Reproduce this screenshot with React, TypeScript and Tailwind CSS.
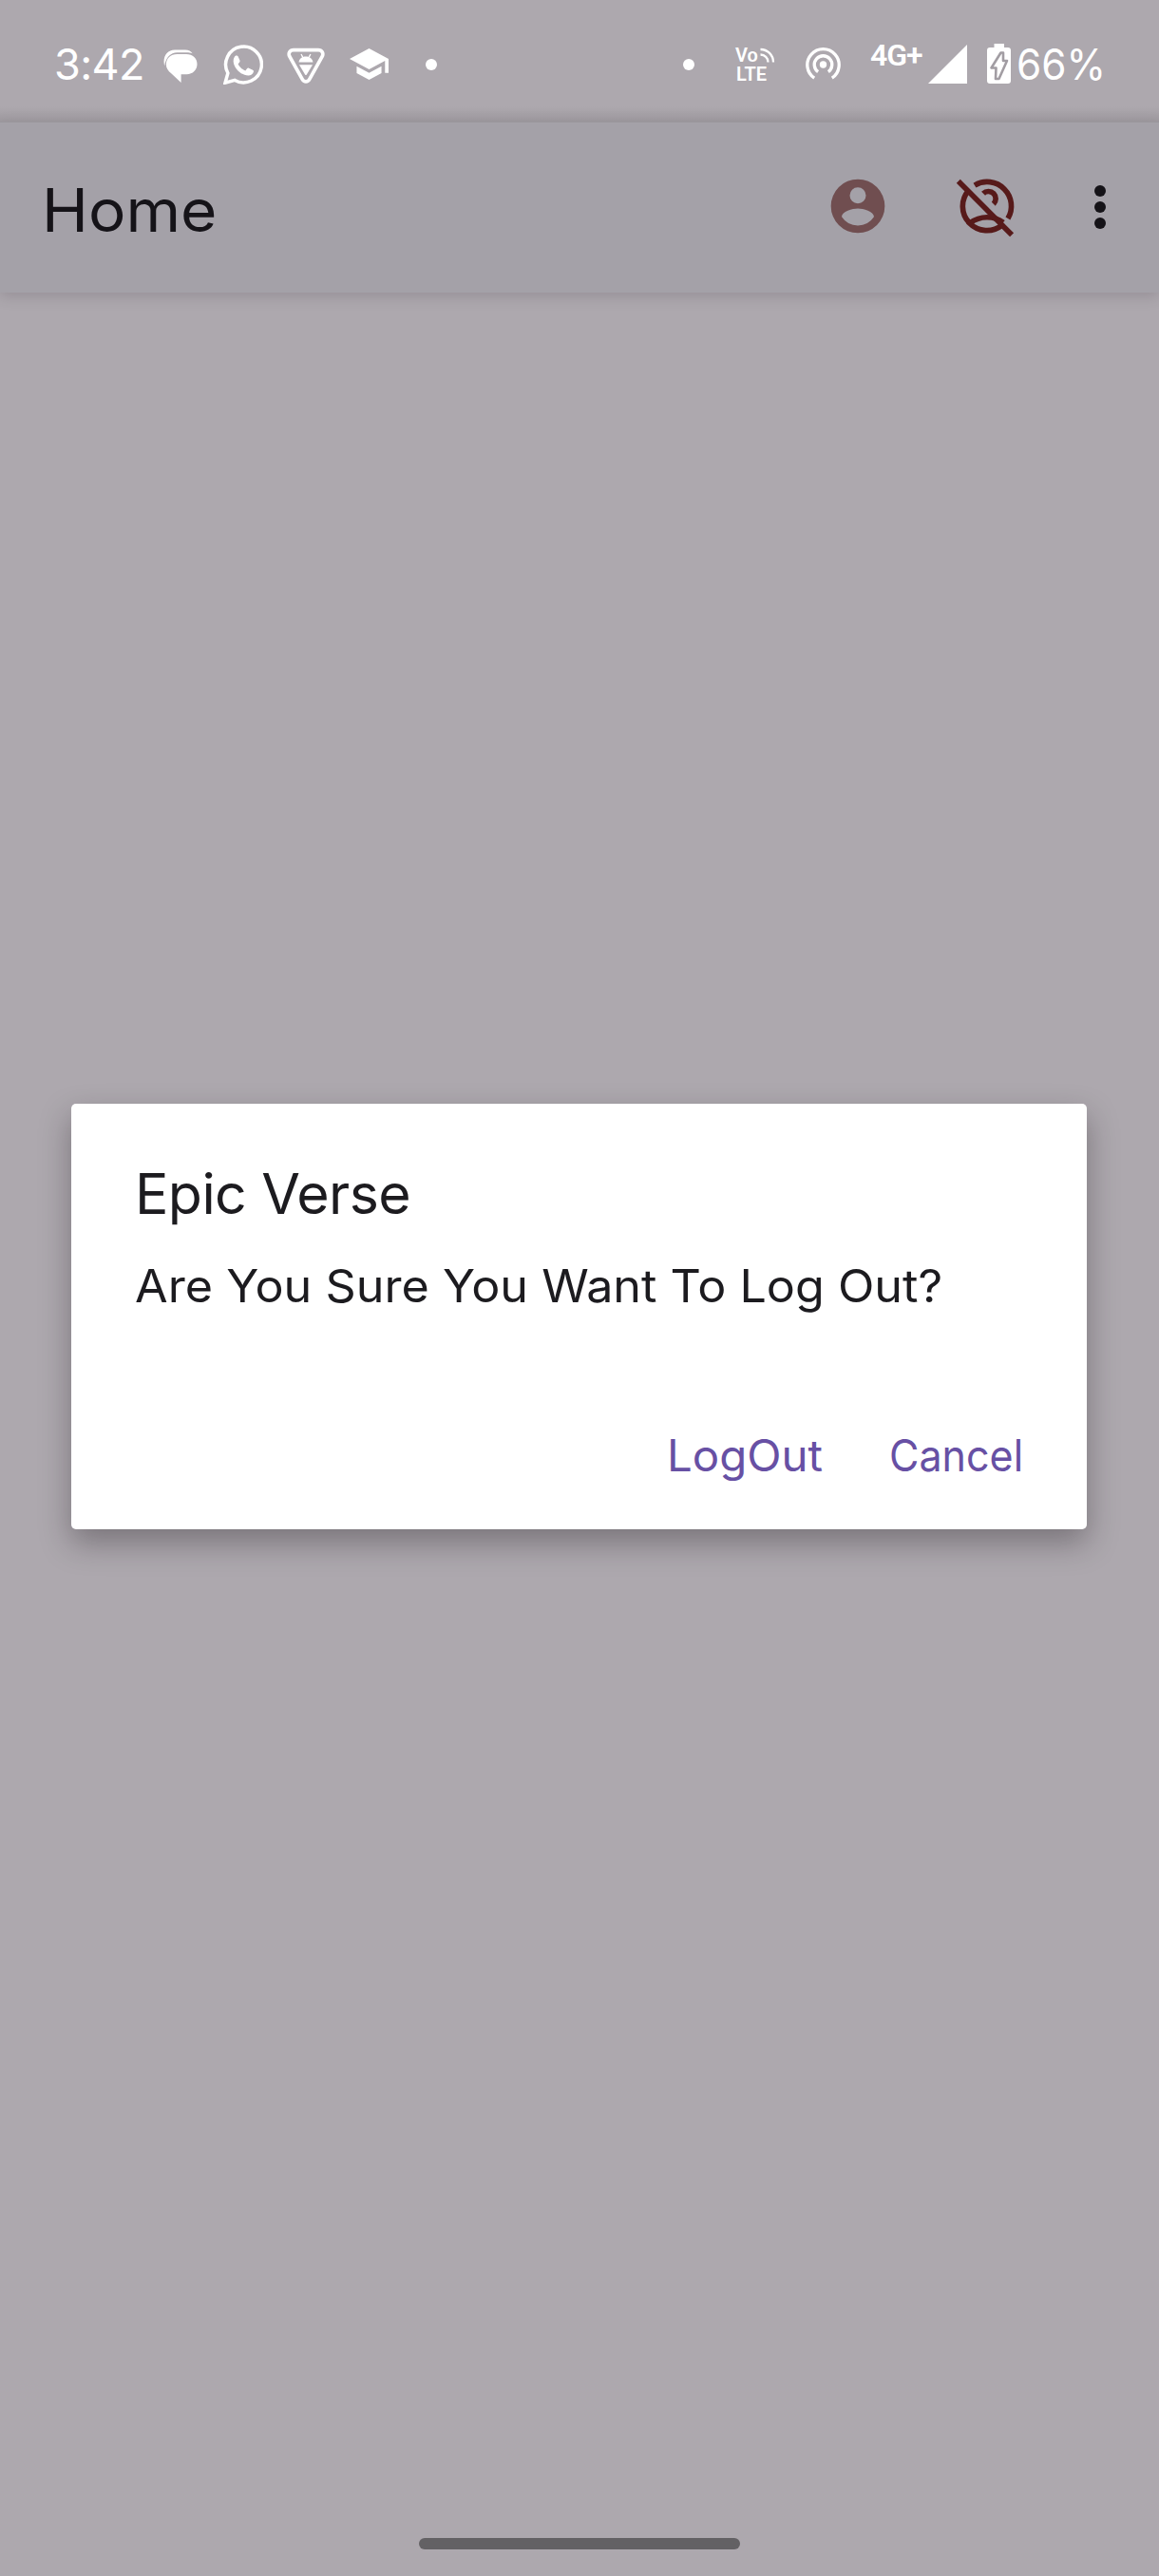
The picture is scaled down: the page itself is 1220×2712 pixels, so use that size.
function MessagesIcon() {
  return (
    <svg viewBox="0 0 36 36" className="h-[36px] w-[36px]" fill="#fff">
      <path d="M1.2 17.5C-1.2 8 3.5.4 12 .4h11c3.6 0 6.2 1.5 7.6 3.8C28.600 3.400 26.600 3.200 24.500 3.200H14.500C7.500 3.200 2.500 8.500 1.2 17.500Z" />
      <path d="M14.500 5H24C31 5 35.500 9.500 35.500 15.500S31 26.200 24.500 26.200H18.600V35L8.500 25.500C4.500 22.500 2.900 19.500 2.900 15.800 2.900 9.500 7.500 5 14.500 5Z" />
    </svg>
  );
}

function WhatsAppIcon() {
  return (
    <svg viewBox="0 0 42 42" className="h-[42px] w-[42px]" fill="none">
      <path d="M2 40.200 4.900 30A18.900 18.900 0 1 1 12.200 37.400Z" stroke="#fff" strokeWidth="3.500" />
      <path
        d="M13.300 11.600c.8-.3 1.800-.2 2.200.7l1.900 4.300c.3.700.1 1.300-.3 1.900l-1.500 1.900c1.800 3.300 4.300 5.500 7.700 7l1.900-2.300c.5-.6 1-.7 1.700-.4l4.200 2c.8.400 1 1 .8 1.900-.6 2.500-3.200 4.100-5.600 4-8.500-.9-15-8.200-15.600-14.700-.2-2.800 1-5.500 2.600-6.300Z"
        fill="#fff"
      />
    </svg>
  );
}

function DroidShieldIcon() {
  return (
    <svg viewBox="0 0 40 38" className="h-[38px] w-[40px]" fill="none">
      <path
        d="M7 2.700H33C37 2.700 38.700 6 37.300 9.200L23.800 33.300C22 36.600 18 36.600 16.200 33.300L2.700 9.200C1.300 6 3 2.700 7 2.700Z"
        stroke="#fff"
        strokeWidth="3.700"
      />
      <path d="M12.500 15.600C12.700 12 15.600 9.400 19.900 9.400S27.200 12 27.400 15.600Z" fill="#fff" />
      <path d="m15 7 1.800 3.400M24.900 7l-1.800 3.400" stroke="#fff" strokeWidth="1.300" />
      <path d="M13 18.200H27L20.800 28.500C20.300 29.300 19.600 29.300 19.100 28.500Z" fill="#fff" />
    </svg>
  );
}

function SchoolIcon() {
  return (
    <svg viewBox="1 3 22 18" className="h-[33px] w-[41px]" preserveAspectRatio="none" fill="#fff">
      <path d="M5 13.180v4L12 21l7-3.820v-4L12 17l-7-3.820ZM12 3 1 9l11 6 9-4.910V17h2V9L12 3Z" />
    </svg>
  );
}

function VolteIcon() {
  return (
    <div className="flex h-[40px] w-[42px] flex-col font-[Roboto] text-[20px] font-semibold leading-[20px] text-white">
      <div className="flex h-[20px]">
        <span className="w-[26px]">Vo</span>
        <svg viewBox="0 0 16 16" className="mt-[2px] h-[16px] w-[16px]" fill="none" stroke="#fff" strokeWidth="2.300">
          <path d="M.5 2C8 2 14 8 14 15.500M.5 7.500C5 7.500 8.500 11 8.500 15.500" />
        </svg>
      </div>
      <span className="pl-[1px]">LTE</span>
    </div>
  );
}

function HotspotIcon() {
  return (
    <svg viewBox="0 0 38 36" className="h-[36px] w-[38px]" fill="none" stroke="#fff" strokeWidth="3.300">
      <circle cx="18.500" cy="19" r="3.700" fill="#fff" stroke="none" />
      <path d="M9.200 33.200A16.700 16.700 0 1 1 27.800 33.200" />
      <path d="M13.100 26.600A9.300 9.300 0 1 1 23.900 26.600" />
    </svg>
  );
}

function BatteryIcon() {
  return (
    <svg viewBox="0 0 25 42" className="h-[42px] w-[25px]">
      <path d="M7.500 0H18V4H22Q25 4 25 7V39Q25 42 22 42H3Q0 42 0 39V7Q0 4 3 4H7.500Z" fill="#fff" />
      <path
        d="M14.500 9.500 4.500 25.500H9.500L9 37H12.500L21 18H17V9.500Z"
        fill="#fff"
        stroke="#a29da3"
        strokeWidth="2.600"
        strokeLinejoin="round"
      />
    </svg>
  );
}

function Dot() {
  return <span className="h-[12px] w-[12px] rounded-full bg-white" />;
}

function StatusBar() {
  return (
    <div className="flex h-[128px] items-start bg-[linear-gradient(to_bottom,transparent_112px,rgba(60,60,60,0.12)_128px)] pl-[57px] text-white">
      <span className="mt-[47px] w-[115px] whitespace-nowrap text-[45px] leading-[42px] tracking-[-0.6px]">
        3:42
      </span>
      <div className="mt-[52px] w-[63px]"><MessagesIcon /></div>
      <div className="mt-[47px] w-[67px]"><WhatsAppIcon /></div>
      <div className="mt-[50px] w-[66px]"><DroidShieldIcon /></div>
      <div className="mt-[51px] w-[80px]"><SchoolIcon /></div>
      <div className="mt-[62px] flex w-[271px]"><Dot /></div>
      <div className="mt-[62px] flex w-[55px]"><Dot /></div>
      <div className="mt-[48px] w-[74px]"><VolteIcon /></div>
      <div className="mt-[49px] w-[68px]"><HotspotIcon /></div>
      <span className="mt-[42px] w-[61px] whitespace-nowrap font-[Roboto] text-[32px] font-semibold leading-[32px] tracking-[-1px]">
        4G+
      </span>
      <svg viewBox="0 0 41 41" className="mr-[21px] mt-[47px] h-[41px] w-[41px]" fill="#fff">
        <path d="M41 0V41H0Z" />
      </svg>
      <div className="mt-[46px] w-[31px]"><BatteryIcon /></div>
      <span className="mt-[47px] origin-left scale-x-[0.94] whitespace-nowrap text-[45px] leading-[42px]">66%</span>
    </div>
  );
}

function AppBar() {
  return (
    <header className="flex h-[180px] items-start border-t border-[#9a979d] bg-[#a4a1a8] pl-[44px] shadow-[0_4px_14px_rgba(60,50,60,0.2)]">
      <h1 className="mt-[60px] w-[825px] text-[#151318]">
        <span className="inline-block origin-left scale-x-[1.045] text-[63px] leading-[64px]">Home</span>
      </h1>
      <svg viewBox="0 0 24 24" className="mr-[68px] mt-[54px] h-[68px] w-[68px]" fill="#704e50">
        <path
          fillRule="evenodd"
          d="M12 2a10 10 0 1 0 0 20 10 10 0 0 0 0-20Zm0 3a3 3 0 1 1 0 6 3 3 0 0 1 0-6Zm0 14.200a7.200 7.200 0 0 1-6-3.220c.03-1.990 4-3.080 6-3.080s5.970 1.090 6 3.080a7.200 7.200 0 0 1-6 3.220Z"
        />
      </svg>
      <svg viewBox="0 0 24 24" className="mr-[79px] mt-[54px] h-[68px] w-[68px]" fill="none" stroke="#571a1a" strokeWidth="2">
        <path d="M7.400 4.260A9 9 0 0 1 19.740 16.600" />
        <path d="M5.200 6.100A9 9 0 0 0 17.600 19.060" />
        <path d="M10.600 7.300A2.600 2.600 0 0 1 14.400 11.200" />
        <path d="M5.700 18.300Q8.500 16.150 12 16.150 15.500 16.150 18 18.100" />
        <path d="M1.340 2.760 21.200 22.700" />
      </svg>
      <div className="mt-[66px] flex flex-col gap-[5px]">
        <span className="h-[12px] w-[12px] rounded-full bg-[#151318]" />
        <span className="h-[12px] w-[12px] rounded-full bg-[#151318]" />
        <span className="h-[12px] w-[12px] rounded-full bg-[#151318]" />
      </div>
    </header>
  );
}

function LogoutDialog() {
  return (
    <div className="absolute inset-0 px-[75px] pt-[1162px]">
      <section
        role="dialog"
        className="flex h-[448px] w-[1069px] flex-col rounded-[5px] bg-white text-[#1c1b1f] shadow-[0_14px_32px_rgba(30,25,30,0.36)]"
      >
        <h2 className="mt-[63px] pl-[67px] text-[59px] leading-[64px] tracking-[-0.6px]">Epic Verse</h2>
        <p className="ml-[67px] mt-[37px] origin-left scale-x-[1.047] self-start whitespace-nowrap text-[48px] leading-[56px]">
          Are You Sure You Want To Log Out?
        </p>
        <div className="mt-[122px] flex pl-[627px] text-[46px] leading-[56px] text-[#6750a4]">
          <div className="w-[234px]">
            <button className="origin-left scale-x-[1.03] whitespace-nowrap">LogOut</button>
          </div>
          <button className="origin-left scale-x-[0.935] whitespace-nowrap">Cancel</button>
        </div>
      </section>
    </div>
  );
}

export default function App() {
  return (
    <div className="relative flex h-[2712px] w-[1220px] flex-col overflow-hidden bg-[#ada8ae] font-[Inter,sans-serif]">
      <StatusBar />
      <AppBar />
      <main className="flex-1" />
      <div className="mb-[28px] h-[12px] w-[338px] self-center rounded-full bg-[#636164]" />
      <LogoutDialog />
    </div>
  );
}
